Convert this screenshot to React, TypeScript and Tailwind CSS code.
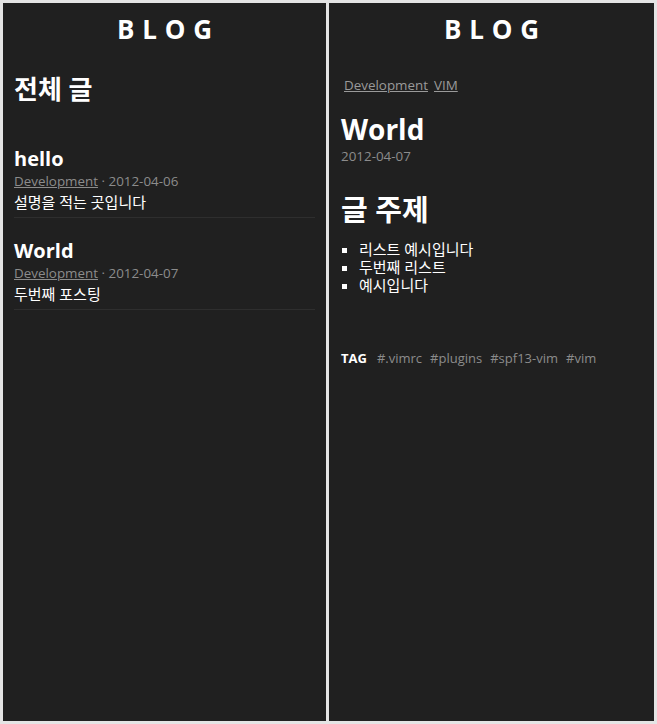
const posts = [
  { title: "hello", category: "Development", date: "2012-04-06", description: "설명을 적는 곳입니다" },
  { title: "World", category: "Development", date: "2012-04-07", description: "두번째 포스팅" },
];

const tags = ["#.vimrc", "#plugins", "#spf13-vim", "#vim"];

const font = { fontFamily: '"Open Sans", "Noto Sans CJK KR", sans-serif' };

function Header() {
  return (
    <h1 className="text-center text-[26px] font-bold tracking-[0.3em] pl-[0.3em] text-white leading-none pt-[13px] pb-[17px]">
      BLOG
    </h1>
  );
}

function PostList() {
  return (
    <div className="flex-1 bg-[#202020] px-[11px]">
      <Header />
      <h2 className="text-[26px] font-bold text-white mt-[17px] leading-none">전체 글</h2>

      <div className="mt-[45px]">
        {posts.map((post) => (
          <div key={post.title} className="border-b border-[#2e2e2e] pb-[4px] mb-[21px]">
            <h3 className="text-[20px] font-bold text-white leading-[24px]">{post.title}</h3>
            <div className="text-[13.4px] text-[#8c8c8c] leading-[21px]">
              <a className="underline">{post.category}</a> · {post.date}
            </div>
            <p className="text-[15px] text-white leading-[21px]">{post.description}</p>
          </div>
        ))}
      </div>
    </div>
  );
}

function PostDetail() {
  return (
    <div className="flex-1 bg-[#202020] px-3">
      <Header />
      <div className="flex gap-[6px] text-[13.4px] text-[#9a9a9a] mt-[16px] pl-[3px] leading-[20px]">
        <a className="underline">Development</a>
        <a className="underline">VIM</a>
      </div>

      <h2 className="text-[28px] font-bold text-white leading-[34px] mt-[17px]">World</h2>
      <div className="text-[13.4px] text-[#8c8c8c] leading-[20px]">2012-04-07</div>

      <h2 className="text-[29px] font-bold text-white leading-[34px] mt-[27px]">글 주제</h2>
      <ul className="mt-[13px] pl-[18px] text-[15px] text-white leading-[18px]">
        {["리스트 예시입니다", "두번째 리스트", "예시입니다"].map((item) => (
          <li key={item} className="list-[square]">{item}</li>
        ))}
      </ul>

      <div className="flex gap-[8px] items-baseline mt-[54px] text-[13px] leading-[20px]">
        <span className="font-bold text-white mr-[2px]">TAG</span>
        {tags.map((tag) => (
          <span key={tag} className="text-[#8c8c8c]">{tag}</span>
        ))}
      </div>
    </div>
  );
}

export default function App() {
  return (
    <div className="min-h-screen bg-[#e4e4e4] flex gap-[3px] p-[3px] h-[724px]" style={font}>
      <PostList />
      <PostDetail />
    </div>
  );
}
